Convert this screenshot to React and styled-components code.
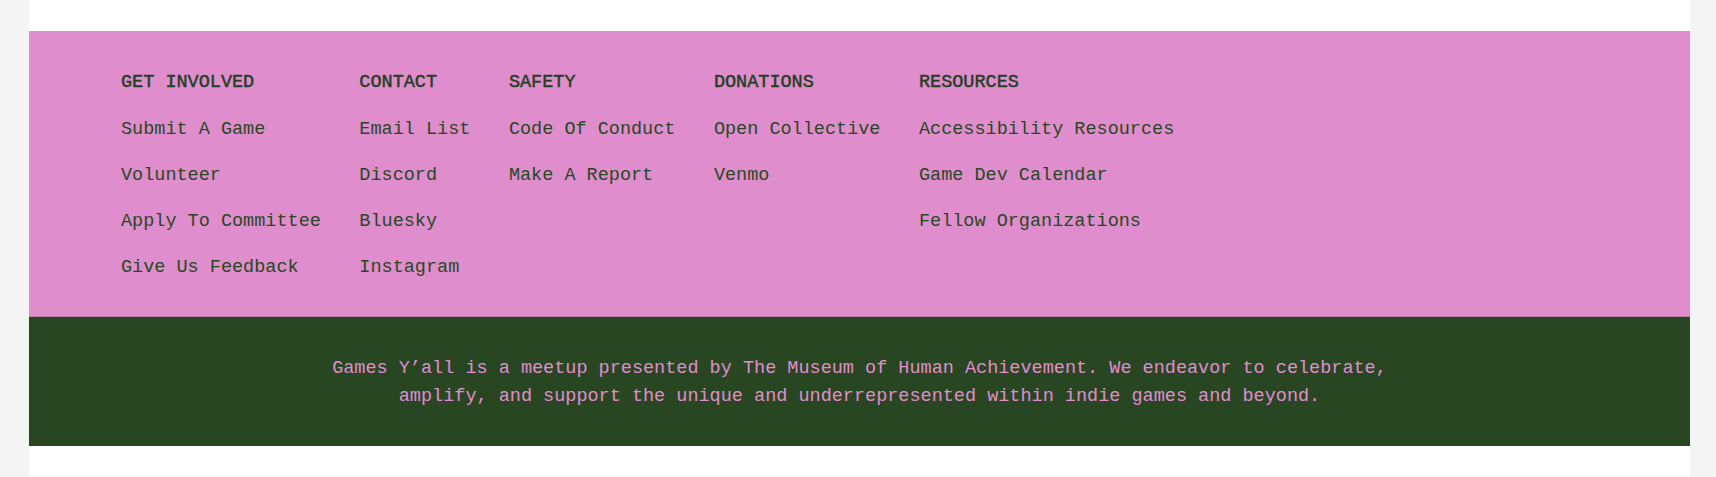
import React from "react";
import styled, { createGlobalStyle } from "styled-components";

const GlobalStyle = createGlobalStyle`
  html, body {
    margin: 0;
    padding: 0;
    background: #f4f4f4;
  }
  body {
    font-family: "Liberation Mono", "DejaVu Sans Mono", monospace;
  }
  * { box-sizing: border-box; }
`;

const PINK = "#e08dce";
const GREEN = "#284622";
const INK = "#284823";

const Page = styled.div`
  margin: 0 26px 0 29px;
  background: #ffffff;
  padding: 31px 0 30px;
`;

const Footer = styled.footer`
  display: flex;
  flex-direction: column;
`;

const LinksPanel = styled.nav`
  background: ${PINK};
  padding: 29px 92px 25px;
  display: flex;
  gap: 38.5px;
  border-bottom: 1px solid #b9809f;
`;

const Column = styled.div`
  display: flex;
  flex-direction: column;
`;

const Heading = styled.h3`
  margin: 0 0 1px;
  font-size: 18.5px;
  line-height: 46px;
  font-weight: 400;
  color: #22401e;
  -webkit-text-stroke: 0.45px #22401e;
  letter-spacing: 0;
  white-space: nowrap;
`;

const LinkItem = styled.a`
  display: block;
  font-size: 18.5px;
  line-height: 46px;
  color: ${INK};
  text-decoration: none;
  white-space: nowrap;
`;

const About = styled.section`
  background: ${GREEN};
  padding: 38px 24px 35px;
`;

const Blurb = styled.p`
  margin: 0 auto;
  max-width: 1100px;
  font-size: 18.5px;
  line-height: 28px;
  color: ${PINK};
  text-align: center;
`;

const columns = [
  { title: "GET INVOLVED", links: ["Submit A Game", "Volunteer", "Apply To Committee", "Give Us Feedback"] },
  { title: "CONTACT", links: ["Email List", "Discord", "Bluesky", "Instagram"] },
  { title: "SAFETY", links: ["Code Of Conduct", "Make A Report"] },
  { title: "DONATIONS", links: ["Open Collective", "Venmo"] },
  { title: "RESOURCES", links: ["Accessibility Resources", "Game Dev Calendar", "Fellow Organizations"] },
];

export default function App() {
  return (
    <>
      <GlobalStyle />
      <Page>
        <Footer>
          <LinksPanel>
            {columns.map((col) => (
              <Column key={col.title}>
                <Heading>{col.title}</Heading>
                {col.links.map((l) => (
                  <LinkItem key={l} href="#">{l}</LinkItem>
                ))}
              </Column>
            ))}
          </LinksPanel>
          <About>
            <Blurb>
              Games Y’all is a meetup presented by The Museum of Human Achievement. We endeavor to celebrate, amplify, and support the unique and underrepresented within indie games and beyond.
            </Blurb>
          </About>
        </Footer>
      </Page>
    </>
  );
}
